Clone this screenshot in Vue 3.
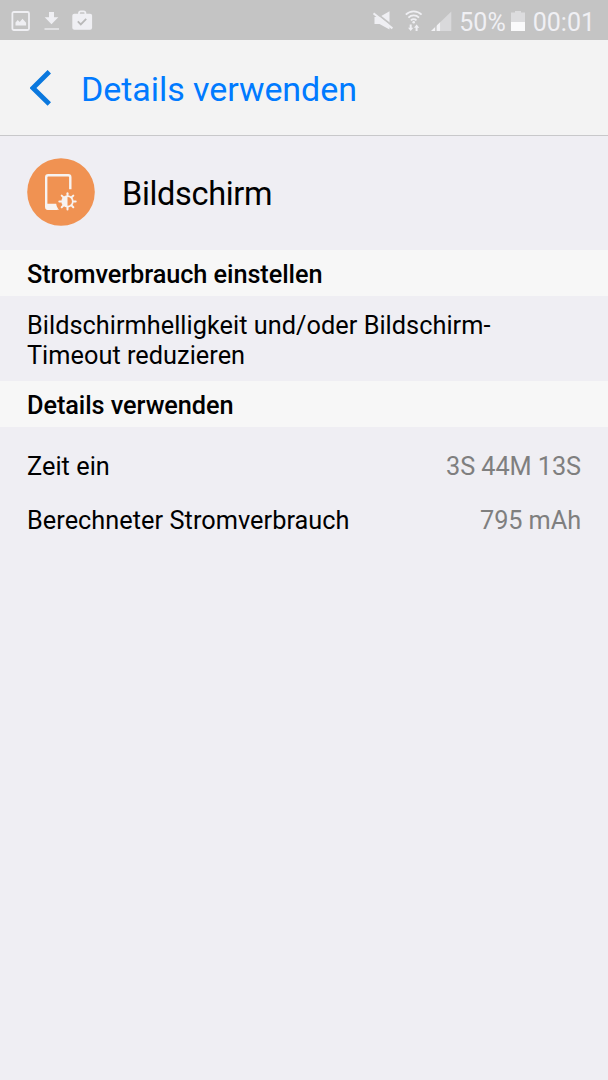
<template>
  <div class="screen">
    <!-- Statusleiste -->
    <div class="statusbar">
      <div class="status-left">
        <svg class="icon-picture" width="20" height="21" viewBox="0 0 20 21">
          <rect x="1.4" y="1" width="16.6" height="18" rx="1.5" fill="none" stroke="#efeff3" stroke-width="1.8" />
          <path d="M4.5 14.5v-3l2.2-2.4 2 2 2.8-3.3 3.6 4v2.7z" fill="#efeff3" />
        </svg>
        <svg class="icon-download" width="16" height="20" viewBox="0 0 16 20">
          <path d="M5 1h5v5.2h4.3L7.5 13.2.7 6.2H5z" fill="#efeff3" />
          <rect x="0.5" y="17" width="14.5" height="2" fill="#e0e0e2" />
        </svg>
        <svg class="icon-bag" width="21" height="21" viewBox="0 0 21 21">
          <path d="M7 4.5V3a1.6 1.6 0 0 1 1.6-1.6h3.2A1.6 1.6 0 0 1 13.4 3v1.5" fill="none" stroke="#efeff3" stroke-width="1.8" />
          <rect x="0.3" y="3.8" width="19.8" height="16" rx="2" fill="#efeff3" />
          <path d="M5.8 11.4l3 3 5.4-5.6" fill="none" stroke="#b9b9b9" stroke-width="1.8" />
        </svg>
      </div>
      <div class="status-right">
        <svg class="icon-mute" width="22" height="20" viewBox="0 0 22 20">
          <path d="M1.5 6h5L16.5.3v18.2L6.5 13h-5z" fill="#efeff3" />
          <path d="M1.5.8L20.5 15.8" stroke="#c4c4c4" stroke-width="2" />
          <path d="M.5 2.4L19.4 17.4" stroke="#efeff3" stroke-width="2" />
        </svg>
        <svg class="icon-wifi" width="18" height="22" viewBox="0 0 18 22">
          <g fill="none" stroke="#efeff3" stroke-width="1.8">
            <path d="M.8 4.7a11.2 11.2 0 0 1 15.8 0" />
            <path d="M3.4 7.6a7.5 7.5 0 0 1 10.6 0" />
            <path d="M5.9 10.3a4 4 0 0 1 5.6 0" />
          </g>
          <circle cx="8.7" cy="12.2" r="1.3" fill="#efeff3" />
          <path d="M4.7 14.5h2v3.2h1.7l-2.7 3.3L3 17.7h1.7zM10.6 21h2v-3.2h1.7l-2.7-3.3-2.7 3.3h1.7z" fill="#efeff3" />
        </svg>
        <svg class="icon-signal" width="21" height="21" viewBox="0 0 21 21">
          <path d="M9.5 10.9L20.3.4V20H9.5z" fill="#d9d9db" />
          <path d="M0 20L9.3 11V20z" fill="#f2f2f5" />
          <path d="M4.9 12v9" stroke="#c4c4c4" stroke-width="1.4" />
        </svg>
        <span class="percent">50%</span>
        <svg class="icon-battery" width="14" height="20" viewBox="0 0 14 20">
          <path d="M0 1.5h4V0h6v1.5h4V11H0z" fill="#dcdcde" />
          <rect y="11" width="14" height="9" fill="#fafafb" />
        </svg>
        <span class="clock">00:01</span>
      </div>
    </div>

    <!-- Kopfzeile -->
    <header class="header">
      <svg class="back" width="22" height="36" viewBox="0 0 22 36">
        <path d="M19.3 1.8L3 18l16.3 16" fill="none" stroke="#0a78de" stroke-width="4.8" />
      </svg>
      <h1 class="title">Details verwenden</h1>
    </header>

    <!-- Eintrag -->
    <div class="entry">
      <svg class="entry-icon" width="68" height="68" viewBox="0 0 68 68">
        <circle cx="34" cy="34" r="33.8" fill="#f09252" />
        <path d="M43.3 31.3V19.2a2 2 0 0 0-2-2H21.2a2 2 0 0 0-2 2v29.5a2 2 0 0 0 2 2h9" fill="none" stroke="#f7f3f1" stroke-width="2.4" />
        <path d="M19 45.8h10.2c.3 2.3 1.2 4.2 2.8 6H21a2 2 0 0 1-2-2z" fill="#f7f3f1" />
        <circle cx="40.5" cy="43.4" r="5.3" fill="none" stroke="#f7f3f1" stroke-width="1.7" />
        <path d="M40.5 38a5.4 5.4 0 0 0 0 10.8z" fill="#f7f3f1" />
        <g stroke="#f7f3f1" stroke-width="2" stroke-linecap="round">
          <path v-for="angle in rays" :key="angle" d="M40.5 37.2v-2" :transform="`rotate(${angle} 40.5 43.4)`" />
        </g>
      </svg>
      <span class="entry-name">Bildschirm</span>
    </div>

    <h2 class="section-title">Stromverbrauch einstellen</h2>
    <p class="hint">Bildschirmhelligkeit und/oder Bildschirm-<br />Timeout reduzieren</p>

    <h2 class="section-title">Details verwenden</h2>
    <div class="details">
      <div v-for="item in details" :key="item.label" class="detail-row">
        <span>{{ item.label }}</span>
        <span class="detail-value">{{ item.value }}</span>
      </div>
    </div>
  </div>
</template>

<script setup>
// Strahlen des Helligkeitssymbols
const rays = [0, 45, 90, 135, 180, 225, 270, 315];

const details = [
  { label: 'Zeit ein', value: '3S 44M 13S' },
  { label: 'Berechneter Stromverbrauch', value: '795 mAh' }
];
</script>

<style>
body {
  margin: 0;
  background: #efeef3;
}
</style>

<style scoped>
.screen {
  width: 608px;
  height: 1080px;
  overflow: hidden;
  background: #efeef3;
  color: #000;
  font-family: Roboto, "Noto Sans", sans-serif;
  font-size: 25.3px;
}

svg {
  display: block;
  flex: none;
}

/* Statusleiste */
.statusbar {
  display: flex;
  justify-content: space-between;
  height: 40px;
  padding: 0 13px 0 11px;
  background: #c4c4c4;
  color: #f0f0f4;
  font-size: 25px;
  line-height: 45px;
}

.status-left,
.status-right {
  display: flex;
  align-items: flex-start;
}

.icon-picture {
  margin-top: 11px;
}

.icon-download {
  margin: 11px 0 0 13px;
}

.icon-bag {
  margin: 10px 0 0 12px;
}

.icon-mute {
  margin-top: 11px;
}

.icon-wifi {
  margin: 10px 0 0 10px;
}

.icon-signal {
  margin: 11px 0 0 8px;
}

.percent {
  margin-left: 7px;
}

.icon-battery {
  margin: 11px 8px 0 5px;
}

/* Kopfzeile */
.header {
  display: flex;
  align-items: center;
  box-sizing: border-box;
  height: 96px;
  padding: 0 0 0 30px;
  background: #f3f3f3;
  border-bottom: 1px solid #c8c8ca;
}

.title {
  margin: 2px 0 0 29px;
  color: #007aff;
  font-size: 34px;
  font-weight: 400;
  line-height: 40px;
  letter-spacing: -0.06px;
}

/* Eintrag */
.entry {
  display: flex;
  align-items: center;
  height: 114px;
  padding: 0 27px;
}

.entry-icon {
  margin-bottom: 2px;
}

.entry-name {
  margin: 2px 0 0 27px;
  font-size: 32.5px;
  letter-spacing: -0.33px;
}

.section-title {
  height: 46px;
  margin: 0;
  padding: 0 27px;
  background: #f7f7f7;
  font-size: 25.3px;
  font-weight: 500;
  line-height: 50px;
  letter-spacing: -0.07px;
}

.hint {
  height: 70px;
  margin: 0;
  padding: 15px 27px 0;
  line-height: 30px;
  letter-spacing: 0.03px;
}

.details {
  padding-top: 13px;
}

.detail-row {
  display: flex;
  justify-content: space-between;
  padding: 0 27px;
  line-height: 54.4px;
  letter-spacing: 0.04px;
}

.detail-value {
  color: #7f7f7f;
  letter-spacing: -0.08px;
}
</style>
